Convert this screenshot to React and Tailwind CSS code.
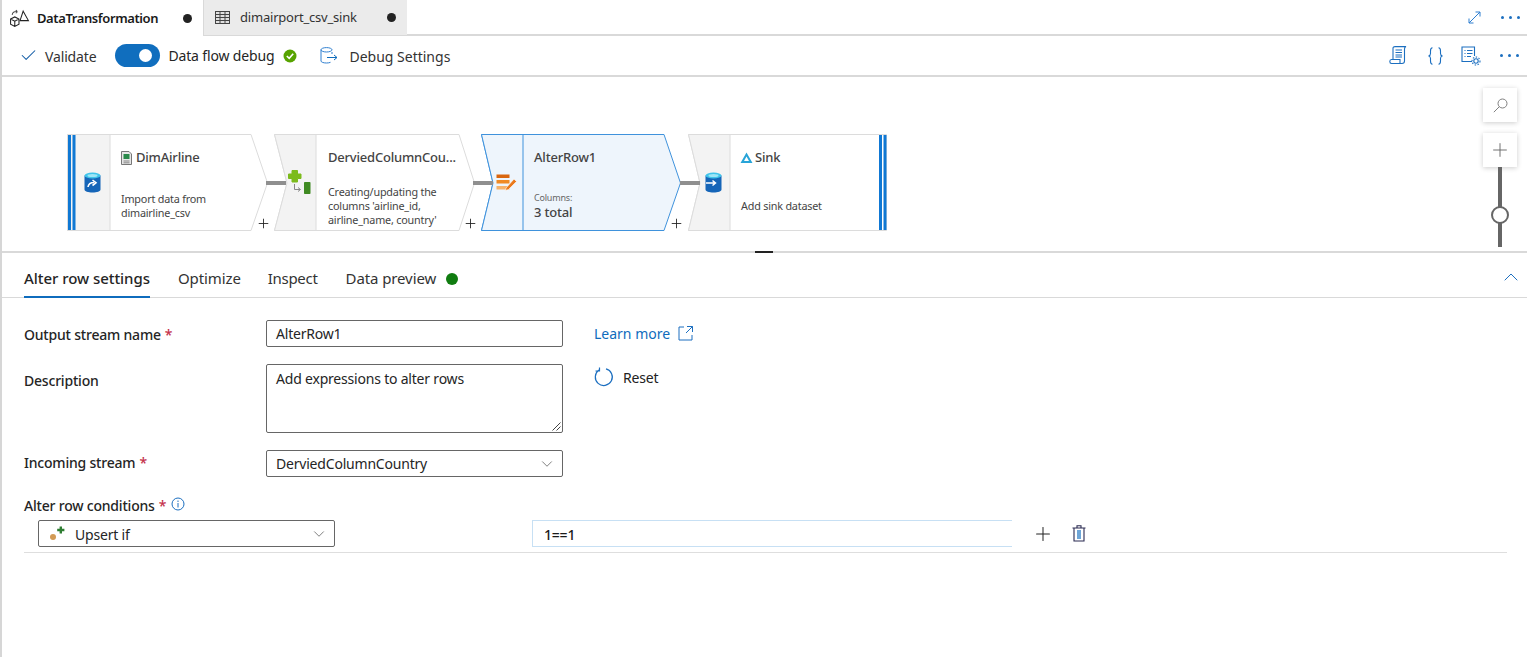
import { ChevronDown, ChevronUp, Check, Plus } from 'lucide-react'

function TransformIcon() {
    return (
        <svg width="21" height="19" viewBox="0 0 20 18" fill="none" stroke="#222" strokeWidth="1">
            <path d="M1.5 9.5 L5.5 7.5 L9.5 9.5 V14.5 L5.5 16.5 L1.5 14.5 Z M1.5 9.5 L5.5 11.5 L9.5 9.5 M5.5 11.5 V16.5" />
            <path d="M13.5 2 L18.5 11 H10.5 Z" />
            <path d="M3 5.5 C3.5 3 5.5 2 8 2.5 M8 2.5 L6.5 1 M8 2.5 L6.5 4" stroke="#444" />
        </svg>
    )
}

function TableIcon() {
    return (
        <svg width="15" height="13" viewBox="0 0 15 13" fill="none" stroke="#444" strokeWidth="1">
            <rect x="0.5" y="0.5" width="14" height="12" fill="#e0e0e0" />
            <path d="M0.5 3.5 H14.5 M0.5 6.5 H14.5 M0.5 9.5 H14.5 M5 0.5 V12.5 M10 0.5 V12.5" />
        </svg>
    )
}

function DebugSettingsIcon() {
    return (
        <svg width="19" height="17" viewBox="0 0 19 17" fill="none" stroke="#2f7fd0" strokeWidth="1">
            <ellipse cx="6.5" cy="2.8" rx="5.5" ry="2.2" />
            <path d="M1 2.8 V14 C1 15.2 3.5 16 6.5 16 C8 16 9.5 15.8 10.5 15.3 M12 5 V7" />
            <path d="M7 10.5 H17 M14 8 L17 10.5 L14 13" stroke="#0f6cbd" />
        </svg>
    )
}

function ScriptIcon() {
    return (
        <svg width="19" height="19" viewBox="0 0 19 19" fill="none" stroke="#1c6fc0" strokeWidth="1.1">
            <path d="M4 13 V2 C4 1 5 0.6 6 0.6 H17 C16 1 15.5 1.5 15.5 3 V15 C15.5 16.5 14.5 17.5 13 17.5 H2.5 C1.3 17.5 0.8 16.5 0.8 15.5 C0.8 14 1.5 13.5 2.5 13.5 H11 V17" />
            <path d="M6.5 4 H13 M6.5 6.5 H13 M6.5 9 H13 M6.5 11 H13" />
        </svg>
    )
}

function BracesIcon() {
    return (
        <svg width="15" height="18" viewBox="0 0 15 18" fill="none" stroke="#1c6fc0" strokeWidth="1.1">
            <path d="M4.5 0.8 C2.5 0.8 2.5 2 2.5 4 V6.5 C2.5 8 1.8 8.8 0.5 9 C1.8 9.2 2.5 10 2.5 11.5 V14 C2.5 16 2.5 17.2 4.5 17.2" />
            <path d="M10.5 0.8 C12.5 0.8 12.5 2 12.5 4 V6.5 C12.5 8 13.2 8.8 14.5 9 C13.2 9.2 12.5 10 12.5 11.5 V14 C12.5 16 12.5 17.2 10.5 17.2" />
        </svg>
    )
}

function ListGearIcon() {
    return (
        <svg width="20" height="20" viewBox="0 0 20 20" fill="none" stroke="#1c6fc0" strokeWidth="1.1">
            <path d="M11 15.5 H1 V1 H13.5 V10" />
            <path d="M3.5 4.5 H4.5 M6 4.5 H11.5 M3.5 7.5 H4.5 M6 7.5 H11.5 M3.5 10.5 H4.5 M6 10.5 H10" />
            <circle cx="15" cy="15" r="2.2" />
            <circle cx="15" cy="15" r="4" strokeDasharray="1.5 1.5" />
        </svg>
    )
}

function Dots({ className }) {
    return (
        <div className={`flex gap-[5px] ${className}`}>
            <span className="w-[3px] h-[3px] rounded-full bg-[#1c6fc0]" />
            <span className="w-[3px] h-[3px] rounded-full bg-[#1c6fc0]" />
            <span className="w-[3px] h-[3px] rounded-full bg-[#1c6fc0]" />
        </div>
    )
}

function SourceIcon() {
    return (
        <svg width="17" height="21" viewBox="0 0 17 21">
            <path d="M0.5 3.5 V17.5 C0.5 19.5 4 20.5 8.5 20.5 C13 20.5 16.5 19.5 16.5 17.5 V3.5 Z" fill="#1565b8" />
            <ellipse cx="8.5" cy="3.5" rx="8" ry="3" fill="#3fc4ea" />
            <ellipse cx="8.5" cy="3.5" rx="5" ry="1.5" fill="#9fe6f6" />
            <path d="M4 15 C4.5 11.5 7 10.5 10 10.5 M8.5 8 L12 10.8 L8.5 13.5" fill="none" stroke="#fff" strokeWidth="1.6" />
        </svg>
    )
}

function SinkDbIcon() {
    return (
        <svg width="17" height="21" viewBox="0 0 17 21">
            <path d="M0.5 3.5 V17.5 C0.5 19.5 4 20.5 8.5 20.5 C13 20.5 16.5 19.5 16.5 17.5 V3.5 Z" fill="#1565b8" />
            <ellipse cx="8.5" cy="3.5" rx="8" ry="3" fill="#3fc4ea" />
            <ellipse cx="8.5" cy="3.5" rx="5" ry="1.5" fill="#9fe6f6" />
            <path d="M1 11 H10 M7.5 8.5 L10.5 11 L7.5 13.5" fill="none" stroke="#fff" strokeWidth="1.5" />
        </svg>
    )
}

function DerivedIcon() {
    return (
        <svg width="23" height="26" viewBox="0 0 23 26">
            <path d="M4 0.5 H9.5 V4 H13 V8.5 H9.5 V12 H4 V8.5 H0.5 V4 H4 Z" fill="#7cbb1c" stroke="#7cbb1c" strokeLinejoin="round" />
            <path d="M6.5 14 V19.5 H12 M10 17.5 L12.5 19.5 L10 21.5" fill="none" stroke="#888" strokeWidth="1" />
            <rect x="16" y="12" width="6.5" height="12" rx="0.8" fill="#3f8a22" />
        </svg>
    )
}

function AlterIcon() {
    return (
        <svg width="21" height="18" viewBox="0 0 21 18">
            <rect x="0.5" y="0.5" width="13" height="3.5" fill="#d9660f" />
            <rect x="0.5" y="6" width="13" height="3.5" fill="#f08a24" />
            <rect x="0.5" y="12" width="13" height="3.5" fill="#f7b26a" />
            <path d="M10 14 L18 5 L20.5 7.5 L12.5 15.5 L9.5 16.5 Z" fill="#e9791c" stroke="#fff" strokeWidth="0.6" />
        </svg>
    )
}

function SheetIcon() {
    return (
        <svg width="11" height="14" viewBox="0 0 11 14">
            <path d="M0.5 0.5 H8 L10.5 3 V13.5 H0.5 Z" fill="#e6e6e6" stroke="#777" />
            <rect x="2.5" y="3" width="6" height="5" fill="#2a8a4a" />
            <path d="M2.5 10 H8.5 M2.5 11.8 H8.5" stroke="#888" />
        </svg>
    )
}

function SynapseIcon() {
    return (
        <svg width="13" height="12" viewBox="0 0 13 12">
            <path d="M6.5 0.5 L12.5 11 H0.5 Z M6.5 4.5 L4 9 H9 Z" fill="#28a4d8" fillRule="evenodd" />
        </svg>
    )
}

// outlines of the flow nodes, drawn on a 97px high box
function NodeShape({ width, notch = 0, tip = 0, box, selected, bars }) {
    const h = 97
    const mid = 49
    const stroke = selected ? '#3f92dc' : '#dcdcdc'
    const fill = selected ? '#eef5fc' : '#ffffff'
    const boxFill = selected ? '#eef5fc' : '#f3f3f3'
    const right = tip
        ? `H${width - tip} L${width - 0.5} ${mid} L${width - tip} ${h - 0.5}`
        : `H${width - 0.5} V${h - 0.5}`
    const d = `M0.5 0.5 ${right} H0.5 L${notch || 0.5} ${mid} Z`
    const boxPath = `M0.5 0.5 H${box} V${h - 0.5} H0.5 L${notch || 0.5} ${mid} Z`
    return (
        <svg className="absolute left-0 top-0" width={width} height={h}>
            <path d={d} fill={fill} stroke={stroke} />
            <path d={boxPath} fill={boxFill} stroke={stroke} />
            {bars === 'left' && (
                <>
                    <rect x="1" y="1" width="3" height="95" fill="#0f78d4" />
                    <rect x="5.5" y="1" width="3" height="95" fill="#0f78d4" />
                </>
            )}
            {bars === 'right' && (
                <>
                    <rect x={width - 8} y="1" width="3" height="95" fill="#0f78d4" />
                    <rect x={width - 3.5} y="1" width="3" height="95" fill="#0f78d4" />
                </>
            )}
        </svg>
    )
}

function Node({ width, notch, tip, box, selected, bars, icon, link, className = '', children }) {
    const iconLeft = notch ? notch - 4 : 8
    return (
        <div className={`relative h-[97px] shrink-0 ${className}`} style={{ width }}>
            <NodeShape width={width} notch={notch} tip={tip} box={box} selected={selected} bars={bars} />
            {link && <div className="absolute h-[4px] bg-[#8f8f8f] top-[47px] -left-[8px] w-[20px]" />}
            <div className="absolute top-0 bottom-0 flex items-center justify-center" style={{ left: iconLeft, width: box - iconLeft }}>
                {icon}
            </div>
            <div className="absolute top-0 bottom-0 right-0" style={{ left: box }}>
                {children}
            </div>
        </div>
    )
}

function NodePlus() {
    return <Plus size={15} strokeWidth={1.4} color="#222" className="absolute -right-[3px] bottom-[0px]" />
}

function Field({ label, required, labelClass, children, className }) {
    return (
        <div className={`flex ${className}`}>
            <div className={`w-[242px] shrink-0 text-[14px] leading-[20px] font-medium text-[#252525] ${labelClass}`}>
                {label}
                {required && <span className="text-[#c4314b] ml-[4px]">*</span>}
            </div>
            {children}
        </div>
    )
}

export default function App() {
    return (
        <div className="h-[657px] w-[1527px] overflow-hidden bg-white border-l-2 border-[#d6d6d6] text-[#252525] font-['Noto_Sans','Open_Sans',sans-serif] tracking-[-0.2px]">
            {/* tabs */}
            <div className="flex h-[36px] border-b-2 border-[#d9d9d9] ml-[-2px] pl-[2px]">
                <div className="w-[202px] h-[36px] flex items-center border-r border-[#d9d9d9] pl-[7px] bg-white">
                    <TransformIcon />
                    <span className="ml-[7px] mt-[1px] text-[13px] font-semibold text-[#1a1a1a] tracking-[-0.4px]">DataTransformation</span>
                    <span className="ml-auto mr-[11px] w-[9px] h-[9px] rounded-full bg-[#222]" />
                </div>
                <div className="w-[203px] h-[35px] flex items-center bg-[#ebebeb] pl-[11px]">
                    <TableIcon />
                    <span className="ml-[10px] mt-[1px] text-[13px] text-[#333]">dimairport_csv_sink</span>
                    <span className="ml-auto mr-[11px] w-[9px] h-[9px] rounded-full bg-[#222]" />
                </div>
                <div className="flex-1 flex items-center justify-end pr-[7px]">
                    <svg width="13" height="13" viewBox="0 0 13 13" fill="none" stroke="#2f7fd0" strokeWidth="1" className="mr-[20px]">
                        <path d="M1 12 L12 1 M7.5 1 H12 V5.5 M1 7.5 V12 H5.5" />
                    </svg>
                    <Dots />
                </div>
            </div>
            {/* toolbar */}
            <div className="flex h-[41px] items-center border-b-2 border-[#d9d9d9] pl-[17px] pr-[8px] text-[14px] text-[#333]">
                <Check size={19} strokeWidth={1.3} color="#0f5aa5" />
                <span className="ml-[7px] mt-[1px] tracking-[-0.15px]">Validate</span>
                <div className="ml-[19px] w-[45px] h-[23px] rounded-full bg-[#106ebe] flex items-center justify-end pr-[8px]">
                    <span className="w-[13px] h-[13px] rounded-full bg-white" />
                </div>
                <span className="ml-[8px] text-[#252525] -mt-[1px] tracking-[-0.15px]">Data flow debug</span>
                <svg width="14" height="14" viewBox="0 0 14 14" className="ml-[9px]">
                    <circle cx="7" cy="7" r="6.5" fill="#57a300" />
                    <path d="M3.8 7 L6.2 9.3 L10.2 4.8" fill="none" stroke="#fff" strokeWidth="1.6" />
                </svg>
                <div className="ml-[23px]"><DebugSettingsIcon /></div>
                <span className="ml-[10px] mt-[1px] tracking-normal">Debug Settings</span>
                <div className="ml-auto flex items-center">
                    <ScriptIcon />
                    <div className="ml-[20px]"><BracesIcon /></div>
                    <div className="ml-[18px]"><ListGearIcon /></div>
                    <Dots className="ml-[19px]" />
                </div>
            </div>
            {/* canvas */}
            <div className="relative h-[176px] border-b-2 border-[#d9d9d9]">
                <div className="flex gap-[6px] pl-[65px] pt-[57px]">
                    <Node width={201} tip={17} box={43} bars="left" icon={<SourceIcon />}>
                        <div className="flex items-center gap-[4px] ml-[11px] mt-[16px] text-[13px] font-medium text-[#444] leading-[15px]">
                            <SheetIcon />DimAirline
                        </div>
                        <div className="ml-[11px] mt-[27px] text-[10.8px] leading-[14px] text-[#444]">
                            Import data from<br />dimairline_csv
                        </div>
                        <NodePlus />
                    </Node>
                    <Node width={201} notch={13} tip={16} box={42} link icon={<DerivedIcon />}>
                        <div className="ml-[12px] mt-[16px] text-[13px] font-medium text-[#444] leading-[15px] whitespace-nowrap">DerviedColumnCou...</div>
                        <div className="ml-[12px] mt-[20px] text-[10.8px] leading-[14px] text-[#444] whitespace-nowrap">
                            Creating/updating the<br />columns 'airline_id,<br />airline_name, country'
                        </div>
                        <NodePlus />
                    </Node>
                    <Node width={200} notch={12} tip={17} box={42} selected link icon={<AlterIcon />}>
                        <div className="ml-[11px] mt-[16px] text-[13px] font-medium text-[#444] leading-[15px]">AlterRow1</div>
                        <div className="ml-[11px] mt-[27px] text-[9px] leading-[12px] text-[#666]">Columns:</div>
                        <div className="ml-[11px] text-[13px] font-medium leading-[16px] text-[#444]">3 total</div>
                        <NodePlus />
                    </Node>
                    <Node width={199} notch={12} box={42} bars="right" link icon={<SinkDbIcon />} className="ml-[1px]">
                        <div className="flex items-center gap-[2px] ml-[10px] mt-[16px] text-[13px] font-medium text-[#444] leading-[15px]">
                            <SynapseIcon />Sink
                        </div>
                        <div className="ml-[11px] mt-[34px] text-[10.8px] leading-[14px] text-[#444]">Add sink dataset</div>
                    </Node>
                </div>
                {/* zoom controls */}
                <div className="absolute left-[1481px] top-[11px] flex flex-col items-center w-[34px]">
                    <div className="w-[34px] h-[34px] bg-white shadow-[0_1px_5px_rgba(0,0,0,0.2)] flex items-center justify-center">
                        <svg width="15" height="15" viewBox="0 0 15 15" fill="none" stroke="#808080" strokeWidth="1">
                            <circle cx="9.5" cy="5.5" r="4.5" />
                            <path d="M6.3 8.7 L0.8 14.2" />
                        </svg>
                    </div>
                    <div className="mt-[11px] w-[34px] h-[34px] bg-white shadow-[0_1px_5px_rgba(0,0,0,0.2)] flex items-center justify-center">
                        <Plus size={22} strokeWidth={1} color="#666" />
                    </div>
                    <div className="relative w-[4px] h-[80px] bg-[#666]">
                        <span className="absolute -left-[7px] top-[39px] w-[18px] h-[18px] rounded-full bg-white border-2 border-[#666]" />
                    </div>
                </div>
                <div className="absolute left-[753px] -bottom-[2px] w-[18px] h-[2px] bg-[#222]" />
            </div>
            {/* panel tabs */}
            <div className="flex h-[45px] border-b border-[#d9d9d9] pl-[22px] text-[15px] text-[#333] tracking-[-0.1px]">
                <div className="h-[45px] border-b-2 border-[#0f6cbd] pt-[14px] font-medium text-[#252525] tracking-[-0.05px]">Alter row settings</div>
                <div className="ml-[28px] pt-[14px]">Optimize</div>
                <div className="ml-[27px] pt-[14px] tracking-[-0.3px]">Inspect</div>
                <div className="ml-[28px] pt-[14px] flex items-start">
                    Data preview
                    <span className="ml-[10px] mt-[6px] w-[12px] h-[12px] rounded-full bg-[#107c10]" />
                </div>
                <ChevronUp size={24} strokeWidth={1} color="#1c6fc0" className="ml-auto mr-[4px] mt-[12px]" />
            </div>
            {/* form */}
            <div className="pl-[22px] pt-[22px]">
                <Field label="Output stream name" required labelClass="translate-y-[1px]" className="h-[27px] items-center">
                    <div className="w-[297px] h-[27px] border border-[#666] rounded-[2px] pl-[9px] text-[14px] leading-[25px]">AlterRow1</div>
                    <span className="ml-[31px] text-[14px] text-[#0f6cbd] tracking-normal">Learn more</span>
                    <svg width="15" height="15" viewBox="0 0 15 15" fill="none" stroke="#1c6fc0" strokeWidth="1" className="ml-[8px]">
                        <path d="M6 1 H1 V14 H14 V9 M9 0.5 H14.5 V6 M14.5 0.5 L8 7" />
                    </svg>
                </Field>
                <Field label="Description" labelClass="pt-[7px]" className="mt-[17px] h-[69px]">
                    <div className="relative w-[297px] h-[69px] border border-[#666] rounded-[2px] pl-[9px] pt-[4px] text-[14px] leading-[20px]">
                        Add expressions to alter rows
                        <svg width="9" height="9" viewBox="0 0 9 9" stroke="#444" className="absolute right-[1px] bottom-[1px]">
                            <path d="M8.5 0.5 L0.5 8.5 M8.5 4.5 L4.5 8.5" />
                        </svg>
                    </div>
                    <div className="ml-[31px] flex items-center h-[20px] mt-[3px]">
                        <svg width="20" height="20" viewBox="0 0 20 20" fill="none" stroke="#1c6fc0" strokeWidth="1.2">
                            <path d="M5 3 A8.5 8.5 0 1 0 12 1.8 M5.5 0.5 V4 H1.5" />
                        </svg>
                        <span className="ml-[9px] text-[14px] text-[#222]">Reset</span>
                    </div>
                </Field>
                <Field label="Incoming stream" required labelClass="-translate-y-[1px]" className="mt-[17px] h-[27px] items-center">
                    <div className="w-[297px] h-[27px] border border-[#666] rounded-[2px] pl-[9px] pr-[6px] flex items-center justify-between text-[14px]">
                        DerviedColumnCountry
                        <ChevronDown size={18} strokeWidth={1} color="#555" />
                    </div>
                </Field>
                <div className="mt-[19px] h-[20px] flex items-start text-[14px] leading-[20px] font-medium">
                    Alter row conditions
                    <span className="text-[#c4314b] ml-[4px]">*</span>
                    <svg width="14" height="14" viewBox="0 0 14 14" fill="none" stroke="#1c6fc0" className="ml-[5px] mt-[1px]">
                        <circle cx="7" cy="7" r="6" />
                        <path d="M7 6 V10.5 M7 3.5 V5" />
                    </svg>
                </div>
                <div className="w-[1483px] h-[33px] mt-[4px] border-b border-[#dedede] pl-[14px] flex items-start">
                    <div className="w-[297px] h-[27px] border border-[#666] rounded-[2px] pl-[9px] pr-[6px] flex items-center text-[14px]">
                        <svg width="18" height="16" viewBox="0 0 18 16">
                            <circle cx="5" cy="11" r="3" fill="#d29a55" />
                            <path d="M10.5 1 H13.5 V4 H16.5 V7 H13.5 V10 H10.5 V7 H7.5 V4 H10.5 Z" fill="#2e7d32" transform="scale(0.8) translate(4 -0.5)" />
                        </svg>
                        <span className="ml-[9px] mt-[1px]">Upsert if</span>
                        <ChevronDown size={18} strokeWidth={1} color="#555" className="ml-auto" />
                    </div>
                    <div className="ml-[197px] w-[480px] h-[27px] border-y border-l border-[#c7e0f4] pl-[11px] text-[14px] leading-[28px] font-medium text-[#1a1a1a]">1==1</div>
                    <Plus size={22} strokeWidth={1.1} color="#222" className="ml-[20px] mt-[3px]" />
                    <svg width="14" height="17" viewBox="0 0 14 17" fill="none" stroke="#2b2b52" strokeWidth="1.1" className="ml-[18px] mt-[5px]">
                        <path d="M0.5 3 H13.5 M5 3 V0.8 H9 V3 M2 3 V16 H12 V3" />
                        <rect x="5" y="5" width="4" height="9" fill="#6ea6d8" stroke="none" />
                    </svg>
                </div>
            </div>
        </div>
    )
}
